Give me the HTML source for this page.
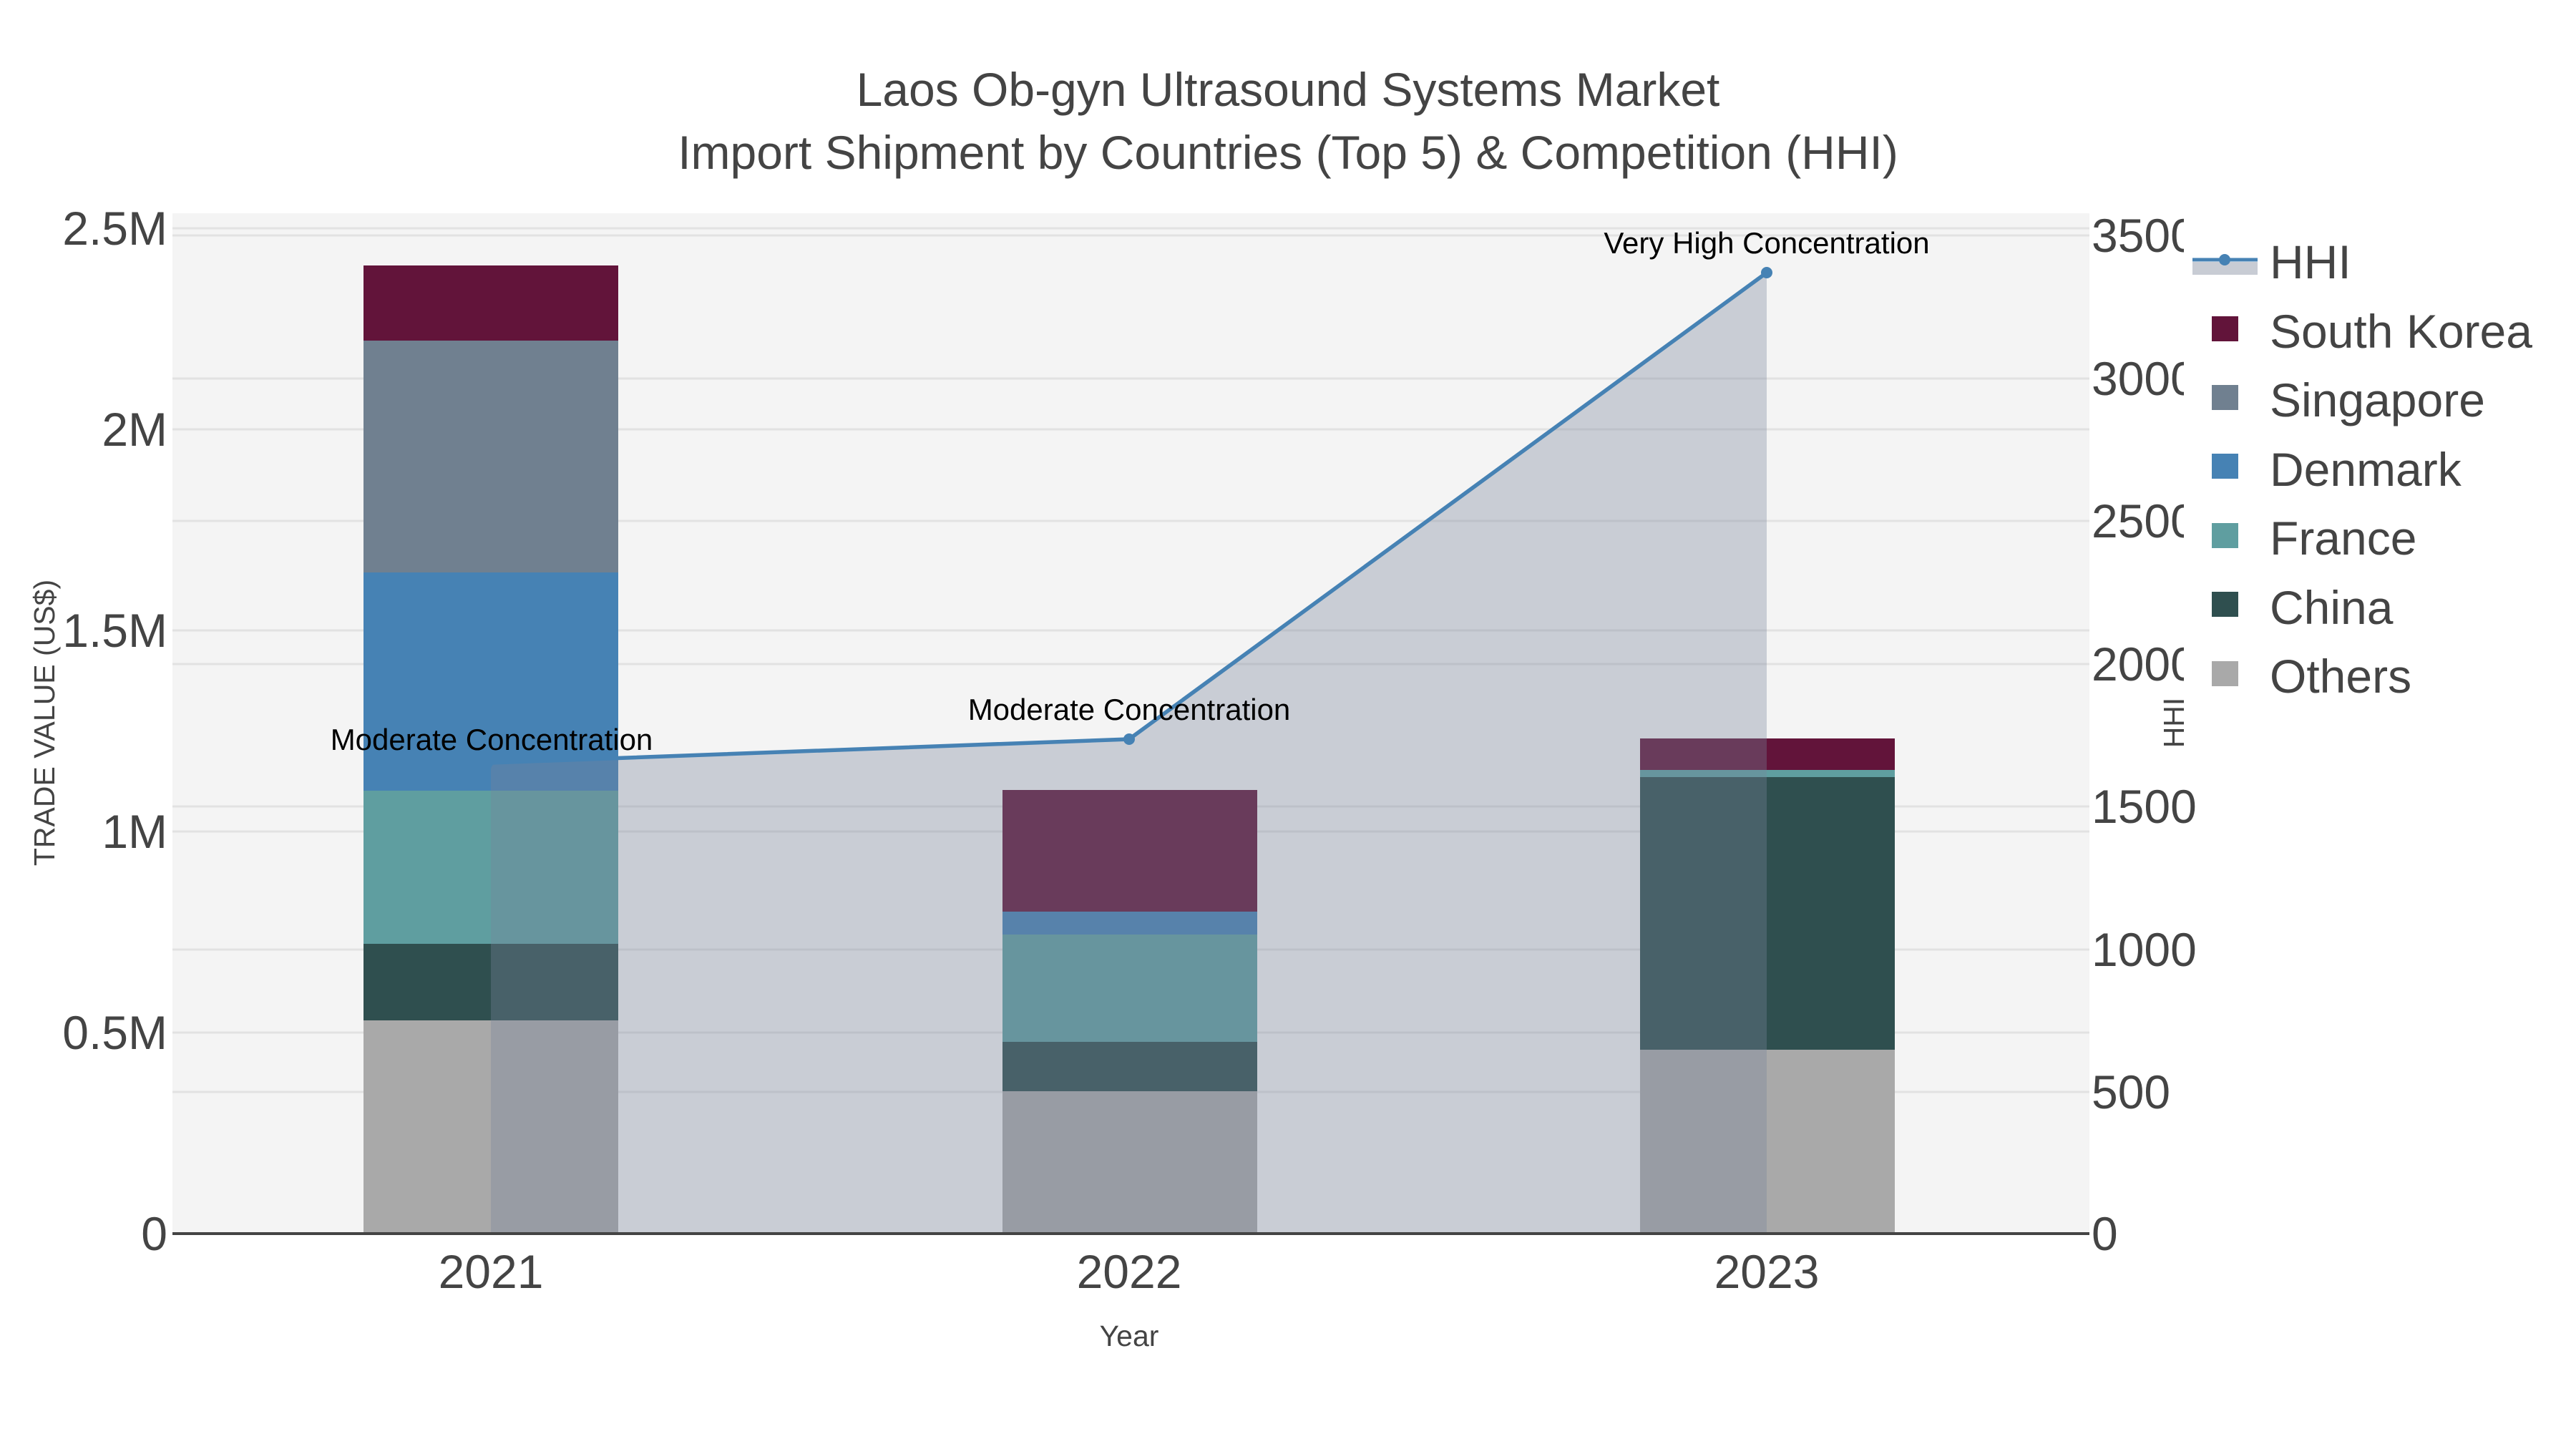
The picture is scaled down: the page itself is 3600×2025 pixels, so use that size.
<!DOCTYPE html>
<html><head><meta charset="utf-8"><style>html,body{margin:0;padding:0;background:#fff;}svg{display:block;}</style></head>
<body>
<svg width="3600" height="2025" viewBox="0 0 3600 2025" xmlns="http://www.w3.org/2000/svg" font-family="Liberation Sans, sans-serif">
<rect width="3600" height="2025" fill="#fff"/>
<rect x="241" y="298" width="2679" height="1426" fill="#f4f4f4"/>
<g stroke="#e2e2e2" stroke-width="3">
<line x1="241" x2="2920" y1="319" y2="319"/><line x1="241" x2="2920" y1="600" y2="600"/><line x1="241" x2="2920" y1="881" y2="881"/><line x1="241" x2="2920" y1="1162" y2="1162"/><line x1="241" x2="2920" y1="1443" y2="1443"/>
<line x1="241" x2="2920" y1="329" y2="329"/><line x1="241" x2="2920" y1="529" y2="529"/><line x1="241" x2="2920" y1="728" y2="728"/><line x1="241" x2="2920" y1="928" y2="928"/><line x1="241" x2="2920" y1="1127" y2="1127"/><line x1="241" x2="2920" y1="1327" y2="1327"/><line x1="241" x2="2920" y1="1526" y2="1526"/>
</g>
<rect x="508" y="371" width="356" height="106" fill="#62143a"/>
<rect x="508" y="476" width="356" height="324" fill="#708090"/>
<rect x="508" y="800" width="356" height="305" fill="#4682b4"/>
<rect x="508" y="1105" width="356" height="215" fill="#5f9ea0"/>
<rect x="508" y="1319" width="356" height="107" fill="#2f4f4f"/>
<rect x="508" y="1426" width="356" height="298" fill="#a9a9a9"/>
<rect x="1401" y="1104" width="356" height="170" fill="#62143a"/>
<rect x="1401" y="1274" width="356" height="32" fill="#4682b4"/>
<rect x="1401" y="1306" width="356" height="150" fill="#5f9ea0"/>
<rect x="1401" y="1456" width="356" height="69" fill="#2f4f4f"/>
<rect x="1401" y="1525" width="356" height="199" fill="#a9a9a9"/>
<rect x="2292" y="1032" width="356" height="45" fill="#62143a"/>
<rect x="2292" y="1076" width="356" height="10" fill="#5f9ea0"/>
<rect x="2292" y="1086" width="356" height="381" fill="#2f4f4f"/>
<rect x="2292" y="1467" width="356" height="257" fill="#a9a9a9"/>
<path d="M686 1724 L686 1076 Q686 1066 700 1066 L1578 1033 L2469 381 L2469 1724 Z" fill="rgb(121,132,155)" fill-opacity="0.35"/>
<polyline points="686,1066 1578,1033 2469,381" fill="none" stroke="#4682b4" stroke-width="5.5"/>
<circle cx="1578" cy="1033" r="8" fill="#4682b4"/><circle cx="2469" cy="381" r="8" fill="#4682b4"/>
<line x1="241" x2="2920" y1="1724" y2="1724" stroke="#444" stroke-width="4"/>
<g font-size="42" fill="#000" text-anchor="middle">
<text x="687" y="1048">Moderate Concentration</text>
<text x="1578" y="1006">Moderate Concentration</text>
<text x="2469" y="354">Very High Concentration</text>
</g>
<g font-size="66" fill="#444" text-anchor="middle">
<text x="1800" y="148">Laos Ob-gyn Ultrasound Systems Market</text>
<text x="1800" y="236">Import Shipment by Countries (Top 5) &amp; Competition (HHI)</text>
</g>
<g font-size="66" fill="#444" text-anchor="end">
<text x="234" y="342">2.5M</text><text x="234" y="623">2M</text><text x="234" y="904">1.5M</text><text x="234" y="1185">1M</text><text x="234" y="1466">0.5M</text><text x="234" y="1747">0</text>
</g>
<g font-size="66" fill="#444" text-anchor="start">
<text x="2923" y="352">3500</text>
<text x="2923" y="552">3000</text><text x="2923" y="751">2500</text><text x="2923" y="951">2000</text>
<text x="2923" y="1150">1500</text><text x="2923" y="1350">1000</text><text x="2923" y="1549">500</text><text x="2923" y="1747">0</text>
</g>
<rect x="3052" y="290" width="110" height="700" fill="#fff"/>
<g font-size="66" fill="#444" text-anchor="middle">
<text x="686" y="1800">2021</text><text x="1578" y="1800">2022</text><text x="2469" y="1800">2023</text>
</g>
<text x="1578" y="1881" font-size="41" fill="#444" text-anchor="middle">Year</text>
<text transform="translate(76,1010) rotate(-90)" font-size="41" fill="#444" text-anchor="middle">TRADE VALUE (US$)</text>
<text transform="translate(3052,1010) rotate(-90)" font-size="41" fill="#444" text-anchor="middle">HHI</text>
<rect x="3064" y="366" width="91" height="18" fill="#c8ccd4"/>
<line x1="3064" x2="3155" y1="363" y2="363" stroke="#4682b4" stroke-width="5"/>
<circle cx="3109" cy="363" r="8" fill="#4682b4"/>
<rect x="3091" y="442" width="37" height="35" fill="#62143a"/>
<rect x="3091" y="538" width="37" height="35" fill="#708090"/>
<rect x="3091" y="634" width="37" height="35" fill="#4682b4"/>
<rect x="3091" y="731" width="37" height="35" fill="#5f9ea0"/>
<rect x="3091" y="827" width="37" height="35" fill="#2f4f4f"/>
<rect x="3091" y="924" width="37" height="35" fill="#a9a9a9"/>
<g font-size="66" fill="#444">
<text x="3172" y="389">HHI</text>
<text x="3172" y="486">South Korea</text>
<text x="3172" y="582">Singapore</text>
<text x="3172" y="679">Denmark</text>
<text x="3172" y="775">France</text>
<text x="3172" y="872">China</text>
<text x="3172" y="968">Others</text>
</g>
</svg>
</body></html>
